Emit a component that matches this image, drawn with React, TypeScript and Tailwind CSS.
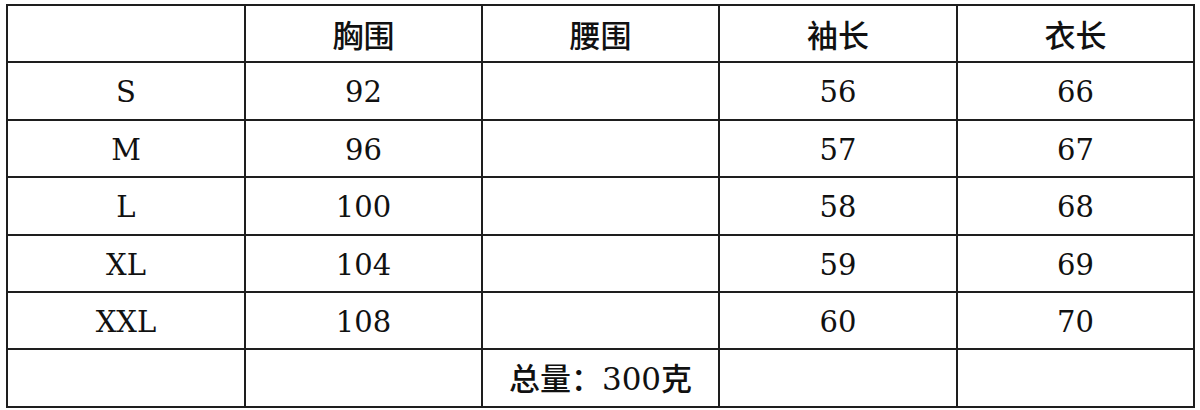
const headers = ["", "胸围", "腰围", "袖长", "衣长"];

const rows: string[][] = [
  ["S", "92", "", "56", "66"],
  ["M", "96", "", "57", "67"],
  ["L", "100", "", "58", "68"],
  ["XL", "104", "", "59", "69"],
  ["XXL", "108", "", "60", "70"],
];

const font = { fontFamily: '"DejaVu Serif", "Noto Sans CJK SC", serif' };

export default function App() {
  return (
    <div className="w-[1200px] h-[410px] bg-white overflow-hidden pt-[4px] pl-[6px]" style={font}>
      <div className="inline-grid grid-cols-[236px_235px_235px_236px_235px] grid-rows-[55px_56px_55px_56px_55px_55px_56px] gap-[2px] p-[2px] bg-[#1e1e1e] text-[#111] text-[29px] font-medium leading-none">
        {headers.map((h, i) => (
          <div key={"h" + i} className="bg-white flex items-center justify-center pt-[5px] text-[31px]">
            {h}
          </div>
        ))}
        {rows.map((r, ri) =>
          r.map((c, ci) => (
            <div key={ri + "-" + ci} className="bg-white flex items-center justify-center pt-[3px]">
              {c}
            </div>
          ))
        )}
        {/* weight row */}
        <div className="bg-white" />
        <div className="bg-white" />
        <div className="bg-white flex items-center justify-center pt-[3px] text-[31px]">总量：300克</div>
        <div className="bg-white" />
        <div className="bg-white" />
      </div>
    </div>
  );
}
